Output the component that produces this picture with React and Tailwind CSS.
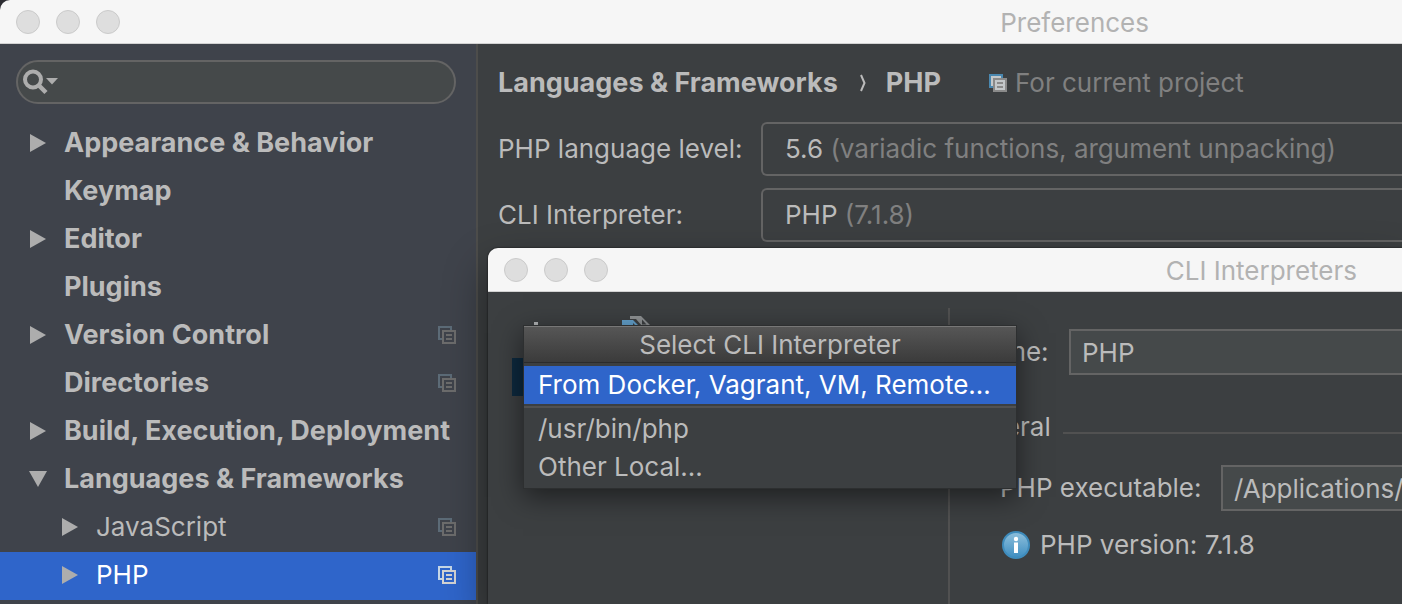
import React from "react";

const sections = [
  { label: "Appearance & Behavior", arrow: "right" },
  { label: "Keymap" },
  { label: "Editor", arrow: "right" },
  { label: "Plugins" },
  { label: "Version Control", arrow: "right", project: true },
  { label: "Directories", project: true },
  { label: "Build, Execution, Deployment", arrow: "right" },
  { label: "Languages & Frameworks", arrow: "down" },
  { label: "JavaScript", arrow: "right", project: true, child: true },
  { label: "PHP", arrow: "right", project: true, child: true, selected: true },
];

function TrafficLights() {
  return (
    <div className="flex gap-4">
      {["Close", "Minimize", "Zoom"].map((name) => (
        <button
          key={name}
          type="button"
          aria-label={name}
          className="size-6 rounded-full border border-[#cbcbcb] bg-[#dedede]"
        />
      ))}
    </div>
  );
}

function Arrow({ direction }) {
  return (
    <svg viewBox="0 0 18 18" className="size-[18px] fill-[#adadad]" aria-hidden="true">
      {direction === "right" && <path d="M1 0 17 9 1 18Z" />}
      {direction === "down" && <path d="M0 1H18L9 17Z" />}
    </svg>
  );
}

function ProjectIcon({ back, front, fill = "none" }) {
  return (
    <svg viewBox="0 0 18 18" className="size-[18px] shrink-0" fill="none" strokeWidth="2" shapeRendering="crispEdges" aria-hidden="true">
      <path d="M13 4V1H1v12h3" stroke={back} fill={fill} />
      <path d="M5 5h12v12H5z" stroke={front} fill={fill} />
      <path d="M8 9h6M8 13h6" stroke={front} />
    </svg>
  );
}

function Sidebar() {
  return (
    <aside className="w-[478px] shrink-0 border-r-2 border-[#4d4d4b] bg-[#3f434b] pt-4">
      <div className="mr-5 ml-4 flex h-11 items-center rounded-full border-2 border-[#646464] bg-[#45494a] pl-[5px]">
        <svg viewBox="0 0 36 26" className="h-[26px] w-9 shrink-0" aria-hidden="true">
          <circle cx="10" cy="10.5" r="8" fill="none" stroke="#adadad" strokeWidth="4" />
          <path d="M16 16.5 23 23.5" stroke="#adadad" strokeWidth="4.5" />
          <path d="M23 9H35L29 15.5Z" fill="#adadad" />
        </svg>
        <input type="search" aria-label="Search settings" className="min-w-0 flex-1 bg-transparent px-2 outline-none" />
      </div>
      <ul className="mt-4">
        {sections.map((s) => (
          <li key={s.label}>
            <button
              type="button"
              className={`flex h-12 w-full items-center pr-5 pb-0.5 text-left ${s.child ? "pl-[61px]" : "pl-[29px] text-[27px] font-bold"} ${
                s.selected ? "bg-[#2f65ca] text-white" : ""
              }`}
            >
              <span className="w-[35px] shrink-0">
                <Arrow direction={s.arrow} />
              </span>
              <span className="flex-1 whitespace-nowrap">{s.label}</span>
              {s.project && (
                <ProjectIcon back={s.selected ? "#c5d6e6" : "#5c6b77"} front={s.selected ? "#d3d3d3" : "#6c6c6c"} />
              )}
            </button>
          </li>
        ))}
      </ul>
    </aside>
  );
}

function ComboBox({ id, value, detail }) {
  return (
    <div className="grid h-[54px] items-center rounded-l-md border-2 border-r-0 border-[#646464]">
      <span className="col-start-1 row-start-1 pl-[22px] whitespace-nowrap" aria-hidden="true">
        {value} <span className="text-[#808080]">{detail}</span>
      </span>
      <select id={id} className="col-start-1 row-start-1 size-full opacity-0">
        <option>{`${value} ${detail}`}</option>
      </select>
    </div>
  );
}

function CopyIcon() {
  return (
    <svg viewBox="0 0 28 32" className="h-8 w-7" aria-hidden="true">
      <path d="M8 0H19L28 9V26H20V10L14 3H8Z" fill="#8d9092" />
      <path d="M20 3.5V8.5H24.5Z" fill="#3c3f41" />
      <path d="M0 4H11L19 12V30H0Z" fill="#62a0cb" />
      <path d="M5 9H9V14H5Z" fill="#3c3f41" />
      <path d="M11 7V12H16Z" fill="#3c3f41" />
    </svg>
  );
}

function Popup() {
  return (
    <div className="absolute top-[77px] left-[35px] w-[494px] border border-[#2d2f30] bg-[#3c3f41] pb-0.5 shadow-[0_8px_26px_rgba(0,0,0,0.5)]">
      <h3 className="h-[37px] border-t border-b border-t-[#777777] border-b-[#2b2b2b] bg-linear-to-b from-[#565656] to-[#3b3b3b] text-center leading-9">
        Select CLI Interpreter
      </h3>
      <div role="menu" className="pt-[3px]">
        <button type="button" role="menuitem" className="block h-[38px] w-full bg-[#2f65ca] pl-3.5 text-left whitespace-nowrap text-white">
          From Docker, Vagrant, VM, Remote...
        </button>
        <hr className="my-0.5 border-t-2 border-[#515151]" />
        <button type="button" role="menuitem" className="block h-[38px] w-full pl-3.5 text-left">
          /usr/bin/php
        </button>
        <button type="button" role="menuitem" className="block h-[38px] w-full pl-3.5 text-left">
          Other Local...
        </button>
      </div>
    </div>
  );
}

function InterpretersDialog() {
  return (
    <section
      aria-label="CLI Interpreters"
      className="absolute top-[248px] right-0 bottom-0 left-[488px] flex flex-col rounded-tl-[10px] bg-[#3c3f41] shadow-[0_20px_44px_rgba(0,0,0,0.45),0_0_2px_rgba(0,0,0,0.8)]"
    >
      <header className="flex h-11 shrink-0 items-center justify-between rounded-tl-[10px] border-b border-[#d2d2d2] bg-[#f6f6f6] pr-[45px] pl-4">
        <TrafficLights />
        <h2 className="pt-0.5 text-[#b2b2b2]">CLI Interpreters</h2>
      </header>
      <div className="flex flex-1 pt-4">
        <div className="w-[462px] shrink-0 border-r-2 border-[#515151] pl-6">
          <div className="flex h-[50px] items-start gap-[76px] pt-2 pl-[14px]">
            <button type="button" aria-label="Add interpreter">
              <svg viewBox="0 0 20 20" className="mt-1.5 size-5" aria-hidden="true">
                <path d="M10 0V20M0 10H20" stroke="#afb1b3" strokeWidth="4" />
              </svg>
            </button>
            <button type="button" aria-label="Copy interpreter">
              <CopyIcon />
            </button>
          </div>
          <div className="mr-3 h-[38px] bg-[#0d293e]" />
        </div>
        <div className="min-w-0 flex-1 pt-[21px]">
          <div className="flex items-center">
            <label htmlFor="name" className="w-[119px] pl-[19px]">
              Name:
            </label>
            <input
              id="name"
              defaultValue="PHP"
              className="h-[46px] min-w-0 flex-1 border-2 border-r-0 border-[#646464] bg-[#45494a] pl-[11px] outline-none"
            />
          </div>
          <div className="mt-8 flex h-10 items-center gap-3 pl-[5px]">
            <h3>General</h3>
            <div className="mt-3 h-0.5 flex-1 bg-[#515151]" />
          </div>
          <div className="mt-[18px] flex items-center pl-[50px]">
            <label htmlFor="executable" className="w-[221px] shrink-0 whitespace-nowrap">
              PHP executable:
            </label>
            <input
              id="executable"
              defaultValue="/Applications/MAMP/bin/php/php7.1.8/bin/php"
              className="h-[46px] min-w-0 flex-1 border-2 border-r-0 border-[#646464] bg-[#45494a] pl-[11px] outline-none"
            />
          </div>
          <div className="mt-4 flex items-center gap-2.5 pl-[52px]">
            <svg viewBox="0 0 28 28" className="size-7" aria-hidden="true">
              <defs>
                <linearGradient id="info" x1="0" y1="0" x2="0" y2="1">
                  <stop offset="0" stopColor="#8fc0dc" />
                  <stop offset="1" stopColor="#3d8dc0" />
                </linearGradient>
              </defs>
              <circle cx="14" cy="14" r="13" fill="url(#info)" stroke="#3f8cbc" strokeWidth="2" />
              <circle cx="14" cy="8" r="2.2" fill="#fff" />
              <path d="M14 11.5V22" stroke="#fff" strokeWidth="4" />
            </svg>
            <p>PHP version: 7.1.8</p>
          </div>
        </div>
      </div>
      <Popup />
    </section>
  );
}

export default function App() {
  return (
    <div className="relative flex min-h-screen flex-col overflow-hidden bg-[#2c2c32] font-['Inter','Liberation_Sans',sans-serif] text-[26px] leading-9 text-[#bbbbbb]">
      <header className="flex h-11 items-center justify-between rounded-tl-[10px] border-b border-[#d2d2d2] bg-[#f6f6f6] pr-[253px] pl-4">
        <TrafficLights />
        <h1 className="pt-0.5 text-[#b2b2b2]">Preferences</h1>
      </header>
      <div className="flex flex-1">
        <Sidebar />
        <main className="min-w-0 flex-1 bg-[#3c3f41] pt-4 pl-5">
          <nav aria-label="Breadcrumb" className="flex h-[46px] items-center text-[27px] font-bold whitespace-nowrap">
            <a href="#languages">Languages &amp; Frameworks</a>
            <svg viewBox="0 0 6 18" className="mr-5 ml-[22px] h-[18px] w-1.5" fill="none" stroke="#bbbbbb" strokeWidth="2" aria-hidden="true">
              <path d="M1 1 4.5 9 1 17" />
            </svg>
            <a href="#php">PHP</a>
            <span className="ml-12 flex items-center gap-2 text-[26px] font-normal text-[#808080]">
              <ProjectIcon back="#4a88b0" front="#8a8a8a" fill="#c4c8ca" />
              For current project
            </span>
          </nav>
          <div className="mt-4 grid grid-cols-[263px_1fr] items-center gap-y-3">
            <label htmlFor="level">PHP language level:</label>
            <ComboBox id="level" value="5.6" detail="(variadic functions, argument unpacking)" />
            <label htmlFor="interpreter">CLI Interpreter:</label>
            <ComboBox id="interpreter" value="PHP" detail="(7.1.8)" />
          </div>
        </main>
      </div>
      <InterpretersDialog />
    </div>
  );
}
